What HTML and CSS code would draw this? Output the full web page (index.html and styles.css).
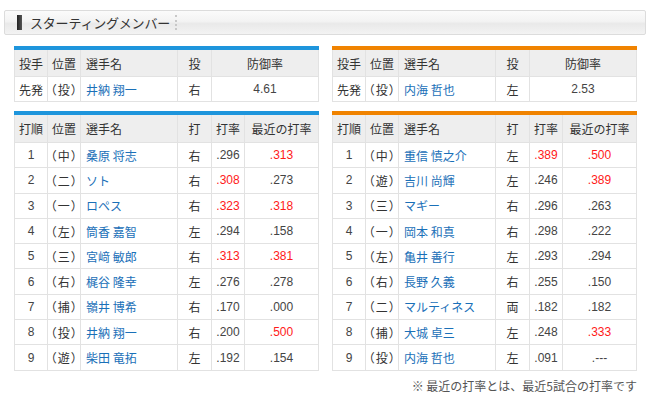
FILE: index.html
```html
<!DOCTYPE html>
<html lang="ja">
<head>
<meta charset="utf-8">
<link rel="stylesheet" href="styles.css">
</head>
<body>
<div class="page">
  <div class="title-bar">
    <span class="marker"></span>
    <span class="title">スターティングメンバー</span>
    <span class="sep"></span>
  </div>
  <div class="columns">
    <div class="col">
      <table class="tbl pit blue">
        <colgroup><col class="c1"><col class="c2"><col class="c3"><col class="c4"><col></colgroup>
        <tr><th>投手</th><th>位置</th><th class="l">選手名</th><th>投</th><th>防御率</th></tr>
        <tr><td>先発</td><td class="pos">（投）</td><td class="l name">井納 翔一</td><td>右</td><td class="num">4.61</td></tr>
      </table>
      <table class="tbl bat blue">
        <colgroup><col class="c1"><col class="c2"><col class="c3"><col class="c4"><col class="c5"><col></colgroup>
        <tr><th>打順</th><th>位置</th><th class="l">選手名</th><th>打</th><th>打率</th><th>最近の打率</th></tr>
        <tr><td class="num">1</td><td class="pos">（中）</td><td class="l name">桑原 将志</td><td>右</td><td class="num">.296</td><td class="num red">.313</td></tr>
        <tr><td class="num">2</td><td class="pos">（二）</td><td class="l name">ソト</td><td>右</td><td class="num red">.308</td><td class="num">.273</td></tr>
        <tr><td class="num">3</td><td class="pos">（一）</td><td class="l name">ロペス</td><td>右</td><td class="num red">.323</td><td class="num red">.318</td></tr>
        <tr><td class="num">4</td><td class="pos">（左）</td><td class="l name">筒香 嘉智</td><td>左</td><td class="num">.294</td><td class="num">.158</td></tr>
        <tr><td class="num">5</td><td class="pos">（三）</td><td class="l name">宮﨑 敏郎</td><td>右</td><td class="num red">.313</td><td class="num red">.381</td></tr>
        <tr><td class="num">6</td><td class="pos">（右）</td><td class="l name">梶谷 隆幸</td><td>左</td><td class="num">.276</td><td class="num">.278</td></tr>
        <tr><td class="num">7</td><td class="pos">（捕）</td><td class="l name">嶺井 博希</td><td>右</td><td class="num">.170</td><td class="num">.000</td></tr>
        <tr><td class="num">8</td><td class="pos">（投）</td><td class="l name">井納 翔一</td><td>右</td><td class="num">.200</td><td class="num red">.500</td></tr>
        <tr><td class="num">9</td><td class="pos">（遊）</td><td class="l name">柴田 竜拓</td><td>左</td><td class="num">.192</td><td class="num">.154</td></tr>
      </table>
    </div>
    <div class="col">
      <table class="tbl pit orange">
        <colgroup><col class="c1"><col class="c2"><col class="c3"><col class="c4"><col></colgroup>
        <tr><th>投手</th><th>位置</th><th class="l">選手名</th><th>投</th><th>防御率</th></tr>
        <tr><td>先発</td><td class="pos">（投）</td><td class="l name">内海 哲也</td><td>左</td><td class="num">2.53</td></tr>
      </table>
      <table class="tbl bat orange">
        <colgroup><col class="c1"><col class="c2"><col class="c3"><col class="c4"><col class="c5"><col></colgroup>
        <tr><th>打順</th><th>位置</th><th class="l">選手名</th><th>打</th><th>打率</th><th>最近の打率</th></tr>
        <tr><td class="num">1</td><td class="pos">（中）</td><td class="l name">重信 慎之介</td><td>左</td><td class="num red">.389</td><td class="num red">.500</td></tr>
        <tr><td class="num">2</td><td class="pos">（遊）</td><td class="l name">吉川 尚輝</td><td>左</td><td class="num">.246</td><td class="num red">.389</td></tr>
        <tr><td class="num">3</td><td class="pos">（三）</td><td class="l name">マギー</td><td>右</td><td class="num">.296</td><td class="num">.263</td></tr>
        <tr><td class="num">4</td><td class="pos">（一）</td><td class="l name">岡本 和真</td><td>右</td><td class="num">.298</td><td class="num">.222</td></tr>
        <tr><td class="num">5</td><td class="pos">（左）</td><td class="l name">亀井 善行</td><td>左</td><td class="num">.293</td><td class="num">.294</td></tr>
        <tr><td class="num">6</td><td class="pos">（右）</td><td class="l name">長野 久義</td><td>右</td><td class="num">.255</td><td class="num">.150</td></tr>
        <tr><td class="num">7</td><td class="pos">（二）</td><td class="l name">マルティネス</td><td>両</td><td class="num">.182</td><td class="num">.182</td></tr>
        <tr><td class="num">8</td><td class="pos">（捕）</td><td class="l name">大城 卓三</td><td>左</td><td class="num">.248</td><td class="num red">.333</td></tr>
        <tr><td class="num">9</td><td class="pos">（投）</td><td class="l name">内海 哲也</td><td>左</td><td class="num">.091</td><td class="num">.---</td></tr>
      </table>
      <p class="note">※ 最近の打率とは、最近5試合の打率です</p>
    </div>
  </div>
</div>
</body>
</html>
```

FILE: styles.css
```css
html, body {
  margin: 0;
  padding: 0;
  background: #ffffff;
}
body {
  font-family: "Noto Sans CJK JP", "Liberation Sans", sans-serif;
  color: #333333;
  font-size: 12px;
}
.page {
  padding: 10px 4px 0 4px;
}
.title-bar {
  height: 23px;
  border: 1px solid #dcdcdc;
  border-radius: 2px;
  background: linear-gradient(#fbfbfb 0%, #f3f3f3 45%, #e9e9e9 55%, #f3f3f3 100%);
  display: flex;
  align-items: center;
  padding-left: 12px;
}
.marker {
  width: 5px;
  height: 15px;
  background: linear-gradient(90deg, #222 0%, #555 100%);
}
.title {
  margin-left: 8px;
  font-size: 13px;
  color: #333;
  letter-spacing: -0.2px;
}
.sep {
  margin-left: 5px;
  width: 0;
  height: 15px;
  border-left: 2px dotted #c8c8c8;
}
.columns {
  display: flex;
  gap: 13px;
  padding: 11px 0 0 10px;
}
.col {
  width: 305px;
}
.tbl {
  width: 305px;
  border-collapse: collapse;
  table-layout: fixed;
}
.tbl.blue { border-top: 4px solid #1e95dc; }
.tbl.orange { border-top: 4px solid #f08300; }
.tbl th, .tbl td {
  border: 1px solid #e2e2e2;
  text-align: center;
  padding: 0;
  font-weight: normal;
  white-space: nowrap;
  overflow: hidden;
}
.tbl th {
  background: #eeeeee;
  height: 26px;
  color: #333;
}
.tbl.bat th {
  height: 27px;
}
.tbl td {
  height: 24px;
  background: #fff;
}
.tbl.bat td {
  height: 24.3px;
}
.tbl .pos {
  font-feature-settings: "palt" 1;
  letter-spacing: 1.5px;
  padding-left: 1px;
}
.tbl .l {
  text-align: left;
  padding-left: 5px;
}
.tbl .name {
  color: #1a70b8;
}
.tbl .num {
  font-family: "Liberation Sans", Arial, sans-serif;
  font-size: 12px;
  color: #444;
}
.tbl .red {
  color: #ff1a1a;
}
.c1 { width: 33px; }
.c2 { width: 33px; }
.c3 { width: 97px; }
.c4 { width: 34px; }
.c5 { width: 33px; }
.pit {
  margin-bottom: 9px;
}
.note {
  margin: 6px 0 0 0;
  text-align: right;
  font-size: 12px;
  color: #555;
}
```
